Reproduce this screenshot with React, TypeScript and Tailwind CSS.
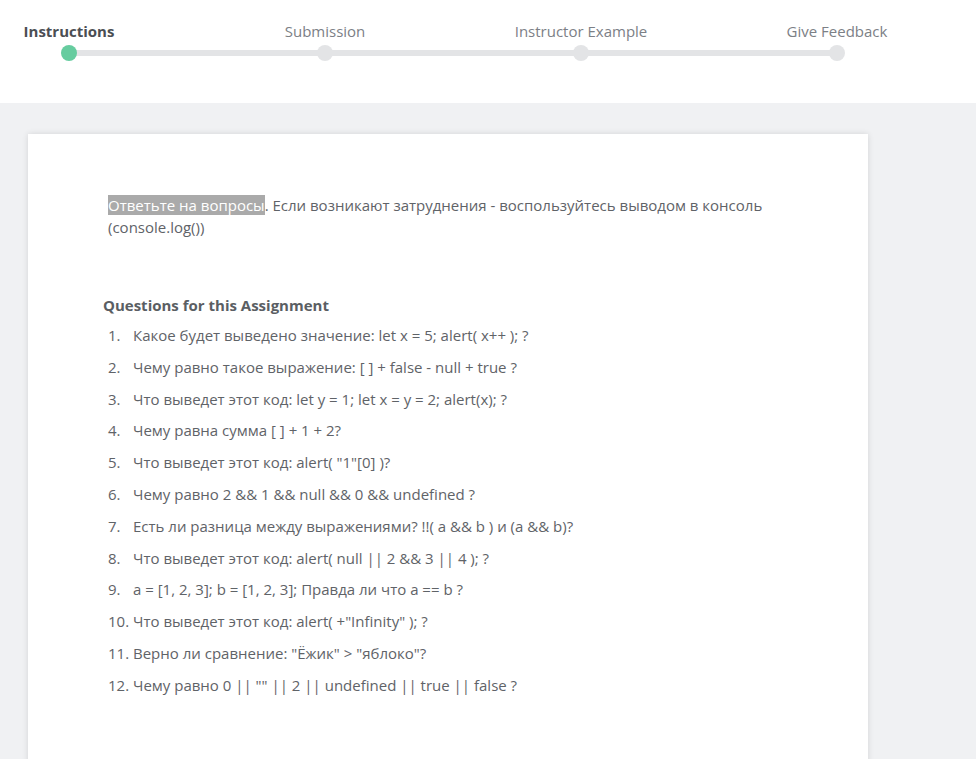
import React from 'react';

const steps = ['Instructions', 'Submission', 'Instructor Example', 'Give Feedback'];

const questions = [
  'Какое будет выведено значение: let x = 5; alert( x++ ); ?',
  'Чему равно такое выражение: [ ] + false - null + true ?',
  'Что выведет этот код: let y = 1; let x = y = 2; alert(x); ?',
  'Чему равна сумма [ ] + 1 + 2?',
  'Что выведет этот код: alert( "1"[0] )?',
  'Чему равно 2 && 1 && null && 0 && undefined ?',
  'Есть ли разница между выражениями? !!( a && b ) и (a && b)?',
  'Что выведет этот код: alert( null || 2 && 3 || 4 ); ?',
  'a = [1, 2, 3]; b = [1, 2, 3]; Правда ли что a == b ?',
  'Что выведет этот код: alert( +"Infinity" ); ?',
  'Верно ли сравнение: "Ёжик" > "яблоко"?',
  'Чему равно 0 || "" || 2 || undefined || true || false ?',
];

function Stepper() {
  return (
    <div className="relative h-[103px] bg-white">
      {/* track */}
      <div className="absolute left-[69px] top-[50px] h-[6px] w-[768px] bg-[#e3e4e6]" />
      <div className="relative flex gap-[116px] pt-[21px]">
        {steps.map((s, i) => (
          <div key={s} className="flex w-[140px] flex-col items-center first:ml-[-1px]">
            <span
              className={
                'text-[15px] leading-[20px] whitespace-nowrap ' +
                (i === 0 ? 'font-bold text-[#4b4e53]' : 'text-[#7c8086]')
              }
            >
              {s}
            </span>
            <span
              className={
                'mt-[4px] size-[16px] rounded-full ' + (i === 0 ? 'bg-[#66cc9f]' : 'bg-[#e3e4e6]')
              }
            />
          </div>
        ))}
      </div>
    </div>
  );
}

export default function App() {
  return (
    <div className="min-h-[759px] bg-[#f0f1f3] font-['Open_Sans',sans-serif] text-[#5f6368]">
      <Stepper />

      <div className="px-[28px] pt-[31px] pb-[20px]">
        <div className="w-[840px] bg-white pl-[80px] pr-[60px] pt-[60px] pb-[90px] shadow-[0_0_6px_rgba(0,0,0,0.12)]">
          <p className="text-[15px] leading-[22px]">
            <span className="bg-[#aaaaaa] text-white">Ответьте на вопросы</span>. Если возникают затруднения -
            воспользуйтесь выводом в консоль (console.log())
          </p>

          <h3 className="mt-[56px] -ml-[5px] text-[15px] font-bold leading-[22px] text-[#5a5e63]">
            Questions for this Assignment
          </h3>

          <ol className="mt-[8px] flex flex-col gap-[9.8px]">
            {questions.map((q, i) => (
              <li key={i} className="flex text-[15px] leading-[22px]">
                <span className="w-[25px] shrink-0">{i + 1}.</span>
                <span>{q}</span>
              </li>
            ))}
          </ol>
        </div>
      </div>
    </div>
  );
}
